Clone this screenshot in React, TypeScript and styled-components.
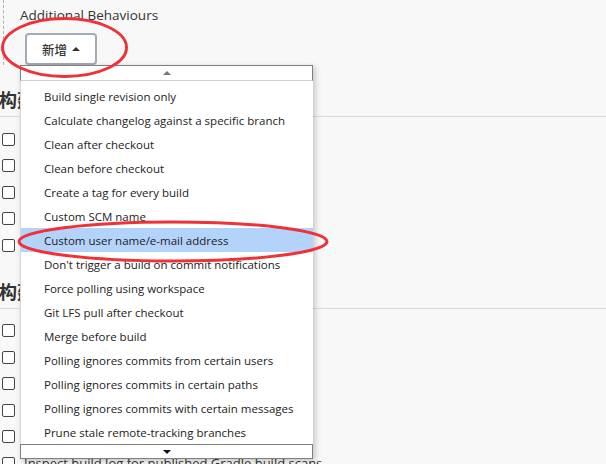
import styled, { createGlobalStyle } from 'styled-components';

const GlobalStyle = createGlobalStyle`
  html, body {
    margin: 0;
    padding: 0;
    background-color: #f8f8f8;
    overflow: hidden;
  }
  body {
    font-family: 'Open Sans', 'Noto Sans CJK SC', sans-serif;
    color: #333;
  }
`;

type Option = {
  label: string;
  selected?: boolean;
};

const options: Option[] = [
  { label: 'Build single revision only' },
  { label: 'Calculate changelog against a specific branch' },
  { label: 'Clean after checkout' },
  { label: 'Clean before checkout' },
  { label: 'Create a tag for every build' },
  { label: 'Custom SCM name' },
  { label: 'Custom user name/e-mail address', selected: true },
  { label: "Don't trigger a build on commit notifications" },
  { label: 'Force polling using workspace' },
  { label: 'Git LFS pull after checkout' },
  { label: 'Merge before build' },
  { label: 'Polling ignores commits from certain users' },
  { label: 'Polling ignores commits in certain paths' },
  { label: 'Polling ignores commits with certain messages' },
  { label: 'Prune stale remote-tracking branches' },
];

const triggers = [
  '触发远程构建 (例如,使用脚本)',
  'Build after other projects are built',
  'Build periodically',
  'GitHub hook trigger for GITScm polling',
  'Poll SCM',
];

const environment = [
  'Delete workspace before build starts',
  'Use secret text(s) or file(s)',
  'Provide Configuration files',
  'Abort the build if it\u2019s stuck',
  'Add timestamps to the Console Output',
  'Inspect build log for published Gradle build scans',
];

const Page = styled.div`
  position: relative;
  width: 606px;
  height: 464px;
  overflow: hidden;
`;

const BehaviourBlock = styled.div`
  margin-left: 3px;
  height: 65px;
  border-left: 1px dashed #b0b0b0;
  padding-left: 16px;
  box-sizing: border-box;
  display: flex;
  flex-direction: column;
  align-items: flex-start;
`;

const BlockTitle = styled.div`
  font-size: 13.5px;
  line-height: 20px;
  margin-top: 5px;
  color: #333;
`;

const AddButton = styled.button`
  margin-top: 8px;
  margin-left: 5px;
  width: 72px;
  height: 32px;
  border: 2px solid #a3acb6;
  border-radius: 4px;
  background-color: #fff;
  font-family: 'Noto Sans CJK SC', sans-serif;
  font-size: 12.5px;
  font-weight: 500;
  color: #333;
  display: flex;
  align-items: center;
  justify-content: center;
  gap: 5px;
  padding: 0;
`;

const Caret = styled.span<{ down?: boolean; color?: string }>`
  width: 0;
  height: 0;
  border-left: 4px solid transparent;
  border-right: 4px solid transparent;
  ${({ down, color }) =>
    down
      ? `border-top: 4px solid ${color || '#333'};`
      : `border-bottom: 4px solid ${color || '#333'};`}
`;

const Section = styled.section<{ first?: boolean }>`
  margin-top: ${({ first }) => (first ? '22px' : '20px')};
`;

const SectionTitle = styled.h2`
  margin: 0 0 0 -1px;
  font-family: 'Noto Sans CJK SC', sans-serif;
  font-size: 18px;
  line-height: 24px;
  font-weight: 700;
  color: #333;
  padding-bottom: 5px;
  border-bottom: 1px solid #dcdcdc;
`;

const Rows = styled.div`
  margin-top: 9px;
  display: flex;
  flex-direction: column;
`;

const Row = styled.label`
  height: 26.5px;
  display: flex;
  align-items: center;
  gap: 9px;
  padding-left: 2px;
  font-size: 13px;
  color: #333;
  white-space: nowrap;
`;

const Box = styled.span`
  width: 13px;
  height: 13px;
  box-sizing: border-box;
  border: 1px solid #444;
  border-radius: 2px;
  background-color: #fff;
  flex-shrink: 0;
`;

const Dropdown = styled.div`
  position: absolute;
  left: 20px;
  top: 65px;
  width: 293px;
  display: flex;
  flex-direction: column;
  box-shadow: 2px 2px 6px rgba(0, 0, 0, 0.22);
`;

const ScrollBar = styled.div<{ bottom?: boolean }>`
  height: 16px;
  box-sizing: border-box;
  background-color: #fff;
  border: 1px solid #7f7f7f;
  ${({ bottom }) =>
    bottom
      ? 'height: 15px;'
      : 'border-bottom: 1px solid #d0d0d0;'}
  display: flex;
  align-items: center;
  justify-content: center;
`;

const OptionList = styled.ul`
  margin: 0;
  padding: 3px 0 0;
  list-style: none;
  background-color: #fff;
  border-left: 1px solid #d6d6d6;
`;

const OptionItem = styled.li<{ selected?: boolean }>`
  height: 24px;
  padding-left: 23px;
  display: flex;
  align-items: center;
  font-size: 11.5px;
  color: #222;
  white-space: nowrap;
  background-color: ${({ selected }) => (selected ? '#b3d3fb' : 'transparent')};
`;

const Marks = styled.svg`
  position: absolute;
  left: 0;
  top: 0;
  pointer-events: none;
`;

const App = () => {
  return (
    <Page>
      <GlobalStyle />
      <BehaviourBlock>
        <BlockTitle>Additional Behaviours</BlockTitle>
        <AddButton>
          新增 <Caret />
        </AddButton>
      </BehaviourBlock>

      <Section first>
        <SectionTitle>构建触发器</SectionTitle>
        <Rows>
          {triggers.map((t) => (
            <Row key={t}>
              <Box />
              {t}
            </Row>
          ))}
        </Rows>
      </Section>

      <Section>
        <SectionTitle>构建环境</SectionTitle>
        <Rows>
          {environment.map((t) => (
            <Row key={t}>
              <Box />
              {t}
            </Row>
          ))}
        </Rows>
      </Section>

      <Dropdown>
        <ScrollBar>
          <Caret color="#777" />
        </ScrollBar>
        <OptionList>
          {options.map((o) => (
            <OptionItem key={o.label} selected={o.selected}>
              {o.label}
            </OptionItem>
          ))}
        </OptionList>
        <ScrollBar bottom>
          <Caret down color="#111" />
        </ScrollBar>
      </Dropdown>

      <Marks width="606" height="464" viewBox="0 0 606 464">
        <ellipse cx="64.5" cy="47.5" rx="62" ry="29" fill="none" stroke="#ee3338" strokeWidth="3" />
        <ellipse cx="173" cy="241.5" rx="154" ry="19.5" fill="none" stroke="#ee3338" strokeWidth="3" />
      </Marks>
    </Page>
  );
};

export default App;
